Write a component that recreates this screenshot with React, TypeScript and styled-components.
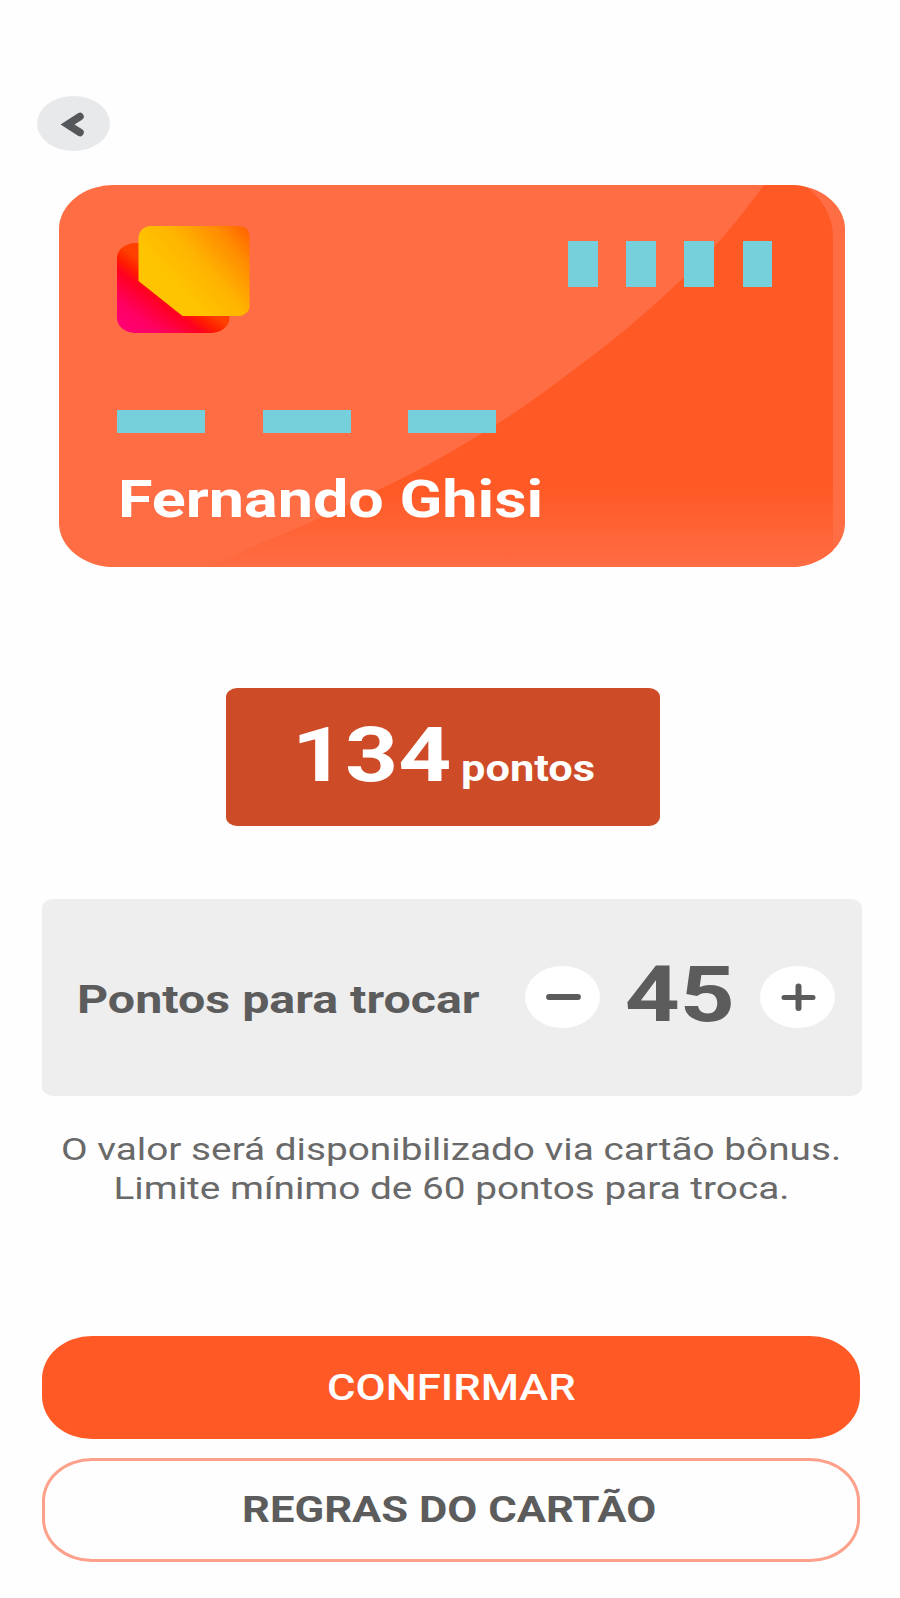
import React from "react";
import styled, { createGlobalStyle } from "styled-components";

const GlobalStyle = createGlobalStyle`
  * { box-sizing: border-box; }
  body {
    margin: 0;
    background: #fefefe;
    font-family: Roboto, "Liberation Sans", sans-serif;
    color: #5c5c5c;
  }
  button { font: inherit; color: inherit; border: 0; padding: 0; margin: 0; }
`;

const Screen = styled.main`
  width: 900px;
  height: 1598px;
  padding: 96px 39px 0 37px;
  display: flex;
  flex-direction: column;
  align-items: flex-start;
  overflow: hidden;
`;

const Wide = styled.span<{ $size: number; $weight: number; $stretch: number; $origin?: string }>`
  display: block;
  white-space: nowrap;
  font-size: ${(p) => p.$size}px;
  font-weight: ${(p) => p.$weight};
  line-height: 1;
  transform: scaleX(${(p) => p.$stretch});
  transform-origin: ${(p) => p.$origin ?? "left"} center;
`;

const BackButton = styled.button`
  display: block;
  width: 73px;
  height: 55px;
  border-radius: 50%;
  background: #e8e9eb;
  svg { display: block; }
`;

const Card = styled.section`
  position: relative;
  width: 786px;
  height: 382px;
  margin: 34px 0 0 22px;
  border-radius: 55px / 44px;
  overflow: hidden;
  background: #ff6d45;
  color: #fff;
`;

const CardArt = styled.svg`
  position: absolute;
  inset: 0;
`;

const CardBody = styled.div`
  position: relative;
  height: 100%;
  padding: 41px 73px 0 58px;
  display: flex;
  flex-direction: column;
`;

const CardTop = styled.div`
  display: flex;
  justify-content: space-between;
  height: 184px;
`;

const Marks = styled.div<{ $gap: number; $top?: number }>`
  display: flex;
  gap: ${(p) => p.$gap}px;
  margin-top: ${(p) => p.$top ?? 0}px;
`;

const Mark = styled.i<{ $w: number; $h: number }>`
  width: ${(p) => p.$w}px;
  height: ${(p) => p.$h}px;
  background: #75d0dc;
`;

const Holder = styled.div`
  margin: 41px 0 0 1px;
`;

const Balance = styled.section`
  width: 434px;
  height: 138px;
  margin: 121px 0 0 189px;
  padding: 28.5px 0 0 66px;
  border-radius: 11px / 9px;
  background: #cd4b27;
  color: #fff;
  display: grid;
  grid-template-columns: 168.5px auto;
  align-items: baseline;
  align-content: start;
`;

const Exchange = styled.section`
  width: 820px;
  height: 197px;
  margin: 73px 0 0 5px;
  padding-left: 34px;
  border-radius: 11px / 9px;
  background: #eee;
  display: grid;
  grid-template-columns: 449px 75px 160px 75px;
  align-items: center;
`;

const Label = styled.div`
  padding: 6px 0 0 1px;
`;

const Amount = styled.div`
  display: flex;
  justify-content: center;
  padding-bottom: 6px;
`;

const Step = styled.button`
  width: 75px;
  height: 62px;
  margin-bottom: 2px;
  border-radius: 50%;
  background: #fff;
  svg { display: block; }
`;

const Note = styled.p`
  width: 820px;
  margin: 37.5px 0 0 4.5px;
  display: flex;
  flex-direction: column;
  align-items: center;
  gap: 8px;
  color: #696969;
`;

const Action = styled.button<{ $outlined?: boolean }>`
  width: 818px;
  height: ${(p) => (p.$outlined ? 104 : 103)}px;
  margin: ${(p) => (p.$outlined ? "19px" : "132.5px")} 0 0 5px;
  padding-right: ${(p) => (p.$outlined ? 4 : 0)}px;
  border-radius: 50px / 43px;
  background: ${(p) => (p.$outlined ? "transparent" : "#ff5a26")};
  border: ${(p) => (p.$outlined ? "3px solid #fda18a" : "0")};
  color: ${(p) => (p.$outlined ? "#5c5c5c" : "#fff")};
  display: flex;
  align-items: center;
  justify-content: center;
`;

function Logo() {
  return (
    <svg width="134" height="108" viewBox="0 0 134 108">
      <defs>
        <linearGradient id="red" gradientUnits="userSpaceOnUse" x1="0" y1="107" x2="43" y2="49">
          <stop offset="0" stopColor="#ff0078" />
          <stop offset=".35" stopColor="#ff0064" />
          <stop offset=".7" stopColor="#ff0022" />
          <stop offset=".84" stopColor="#ff1c00" />
          <stop offset="1" stopColor="#ff4000" />
        </linearGradient>
        <linearGradient id="gold" gradientUnits="userSpaceOnUse" x1="60" y1="62" x2="134" y2="-3">
          <stop offset="0" stopColor="#ffc400" />
          <stop offset=".35" stopColor="#ffb400" />
          <stop offset=".7" stopColor="#ff8c00" />
          <stop offset="1" stopColor="#ff5a00" />
        </linearGradient>
      </defs>
      <rect x="0" y="17" width="112.5" height="90" rx="18" ry="15" fill="url(#red)" />
      <path
        d="M32 0H121Q132 0 132.500 10V81Q132 87 124 90H65.500L21.500 55V12Q22 2 32 0Z"
        fill="url(#gold)"
      />
    </svg>
  );
}

function CardBackground() {
  return (
    <CardArt width="786" height="382" viewBox="0 0 786 382">
      <defs>
        <linearGradient id="fade" gradientUnits="userSpaceOnUse" x1="0" y1="0" x2="0" y2="382">
          <stop offset="0" stopColor="#ff5a26" />
          <stop offset=".8" stopColor="#ff5a26" />
          <stop offset=".92" stopColor="#ff6538" />
          <stop offset="1" stopColor="#ff6c43" />
        </linearGradient>
      </defs>
      <path
        d="M705 0C683 29 655 66 622 95C586 129 554 156 517 183C491 203 465 222 438 239C400 263 361 285 321 304C281 324 241 343 204 357L150 382H774V50C774 34 765 14 745 0Z"
        fill="url(#fade)"
      />
    </CardArt>
  );
}

const cardDigits = [0, 1, 2, 3];
const cardGroups = [0, 1, 2];

export default function App() {
  return (
    <>
      <GlobalStyle />
      <Screen>
        <BackButton aria-label="Voltar">
          <svg width="73" height="55" viewBox="0 1 73 55">
            <path
              d="M43 21.500L30.500 29.500L43 37.500"
              fill="none"
              stroke="#55585a"
              strokeWidth="7.500"
              strokeLinecap="round"
              strokeLinejoin="miter"
            />
          </svg>
        </BackButton>

        <Card>
          <CardBackground />
          <CardBody>
            <CardTop>
              <Logo />
              <Marks $gap={28.6} $top={15}>
                {cardDigits.map((n) => (
                  <Mark key={n} $w={29.5} $h={46} />
                ))}
              </Marks>
            </CardTop>
            <Marks $gap={57.6}>
              {cardGroups.map((n) => (
                <Mark key={n} $w={88} $h={23} />
              ))}
            </Marks>
            <Holder>
              <Wide $size={52} $weight={700} $stretch={1.209}>Fernando Ghisi</Wide>
            </Holder>
          </CardBody>
        </Card>

        <Balance>
          <Wide $size={76} $weight={700} $stretch={1.218}>134</Wide>
          <Wide $size={36} $weight={700} $stretch={1.205}>pontos</Wide>
        </Balance>

        <Exchange>
          <Label>
            <Wide $size={39} $weight={700} $stretch={1.24}>Pontos para trocar</Wide>
          </Label>
          <Step aria-label="Diminuir">
            <svg width="75" height="62" viewBox="0 0 75 62">
              <path d="M24 31H53" stroke="#5c5c5c" strokeWidth="5.800" strokeLinecap="round" />
            </svg>
          </Step>
          <Amount>
            <Wide $size={78} $weight={700} $stretch={1.23} $origin="center">45</Wide>
          </Amount>
          <Step aria-label="Aumentar">
            <svg width="75" height="62" viewBox="0 0 75 62">
              <path d="M24 31.500H53" stroke="#5c5c5c" strokeWidth="5" strokeLinecap="round" />
              <path d="M38.500 20.500V42" stroke="#5c5c5c" strokeWidth="6" strokeLinecap="round" />
            </svg>
          </Step>
        </Exchange>

        <Note>
          <Wide $size={31} $weight={400} $stretch={1.25} $origin="center">
            O valor será disponibilizado via cartão bônus.
          </Wide>
          <Wide $size={31} $weight={400} $stretch={1.25} $origin="center">
            Limite mínimo de 60 pontos para troca.
          </Wide>
        </Note>

        <Action>
          <Wide $size={36} $weight={500} $stretch={1.215} $origin="center">CONFIRMAR</Wide>
        </Action>
        <Action $outlined>
          <Wide $size={36} $weight={700} $stretch={1.21} $origin="center">REGRAS DO CARTÃO</Wide>
        </Action>
      </Screen>
    </>
  );
}
